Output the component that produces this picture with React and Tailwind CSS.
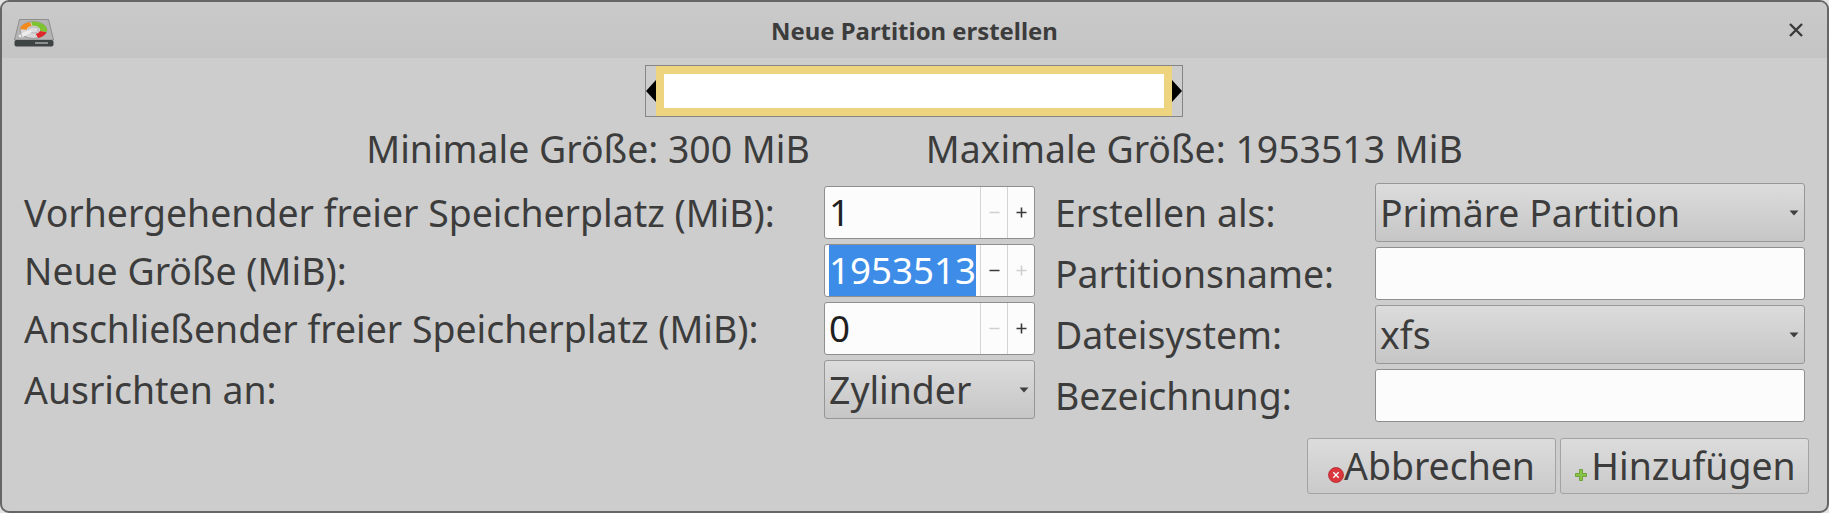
const sans = "font-['Noto_Sans','Liberation_Sans',sans-serif]";

function Caret() {
  return (
    <svg width="10" height="6" viewBox="0 0 10 6" className="shrink-0">
      <path d="M0.5 0.5H9.5L5 5.5Z" fill="#3f3f3f" />
    </svg>
  );
}

function Combo({ text, h, width, pad = "pl-[4px]" }) {
  return (
    <div className={`flex items-center justify-between ${pad} pr-[5px] ${h} ${width} rounded-[3px] border border-[#979797] bg-gradient-to-b from-[#dcdcdc] to-[#c6c6c6]`}>
      <span className="leading-none whitespace-nowrap">{text}</span>
      <Caret />
    </div>
  );
}

function Spin({ value, selected, minusOff, plusOff, h }) {
  return (
    <div className={`flex items-stretch w-[211px] ${h} rounded-[3px] border border-[#8f8f8f] bg-[#fcfcfc] overflow-hidden`}>
      <div className="flex-1 flex items-stretch pl-[4px] text-[#1f1f1f] text-[36.75px] leading-none">
        {selected ? (
          <span className="flex items-center bg-[#3d8de8] text-white w-[147px] justify-center">{value}</span>
        ) : (
          <span className="flex items-center">{value}</span>
        )}
      </div>
      <div className={`w-[27px] flex items-center justify-center border-l border-[#d3d3d3] ${minusOff ? "text-[#cfcfcf]" : "text-[#3a3a3a]"}`}>
        <svg width="11" height="11" viewBox="0 0 11 11"><path d="M0.5 5.5H10.5" stroke="currentColor" strokeWidth="1.6" /></svg>
      </div>
      <div className={`w-[27px] flex items-center justify-center border-l border-[#d3d3d3] ${plusOff ? "text-[#cfcfcf]" : "text-[#3a3a3a]"}`}>
        <svg width="11" height="11" viewBox="0 0 11 11"><path d="M0.5 5.5H10.5M5.5 0.5V10.5" stroke="currentColor" strokeWidth="1.6" /></svg>
      </div>
    </div>
  );
}

function Row({ label, children, width = "w-[800px]" }) {
  return (
    <div className="flex items-center">
      <span className={`${width} shrink-0 whitespace-nowrap leading-none`}>{label}</span>
      {children}
    </div>
  );
}

function TextBox() {
  return <div className="w-[430px] h-[53px] rounded-[3px] border border-[#8f8f8f] bg-[#fcfcfc]" />;
}

function DriveIcon() {
  return (
    <svg width="40" height="28" viewBox="0 0 40 28" className="shrink-0 mt-[6px]">
      <path d="M5.5 0.5H34.5L39.5 21H0.5Z" fill="#b4b4b4" stroke="#8e8e8e" strokeLinejoin="round" />
      <rect x="0.5" y="21" width="39" height="6.5" rx="2" fill="#3d4443" />
      <rect x="21" y="23" width="13" height="2" fill="#8b8f8e" />
      <g transform="translate(19.5 11) scale(1.6 1)">
        <circle r="8.4" fill="#d8d8d8" stroke="#6f6f6f" strokeWidth="0.4" />
        <path d="M-1.09 -6.2A6.3 6.3 0 0 1 6.09 1.63" fill="none" stroke="#7fc232" strokeWidth="4.2" />
        <path d="M-6.28 -0.55A6.3 6.3 0 0 1 -1.63 -6.09" fill="none" stroke="#f28a1e" strokeWidth="4.2" />
        <path d="M6.09 1.63A6.3 6.3 0 0 1 2.15 5.92" fill="none" stroke="#e0282c" strokeWidth="4.2" />
        <circle r="3" fill="#dcdcdc" stroke="#8d8d8d" strokeWidth="0.4" />
      </g>
      <path d="M4 16L16 10.5L18 13L7 19Z" fill="#ededed" />
      <circle cx="6" cy="17" r="2" fill="#e4e4e4" stroke="#888" strokeWidth="0.5" />
    </svg>
  );
}

function Btn({ icon, text, gap, mb, pad = "" }) {
  return (
    <div className={`w-[249px] h-[56px] flex items-center justify-center rounded-[3px] border border-[#a3a3a3] bg-gradient-to-b from-[#dcdcdc] to-[#cacaca] ${gap} ${pad}`}>
      <span className={`self-end ${mb} shrink-0 flex`}>{icon}</span>
      <span className="leading-none whitespace-nowrap">{text}</span>
    </div>
  );
}

export default function App() {
  return (
    <div className={`w-[1829px] h-[513px] bg-[#e4e4e4] ${sans}`}>
      <div className="w-full h-full flex flex-col border-2 border-[#666666] rounded-[9px] bg-[#cdcdcd] text-[37.4px] text-[#3c3c3c] overflow-hidden">
        <div className="h-[56px] shrink-0 flex items-center pl-[12px] pr-[24px] bg-gradient-to-b from-[#cacaca] to-[#c4c4c4]">
          <DriveIcon />
          <div className="flex-1 text-center text-[23.9px] font-bold text-[#3c3c3c] pr-[14px] pt-[1px]">Neue Partition erstellen</div>
          <svg width="14" height="14" viewBox="0 0 14 14">
            <path d="M1 1L13 13M13 1L1 13" stroke="#3a3a3a" strokeWidth="2.4" />
          </svg>
        </div>

        <div className="flex justify-center mt-[7px] pr-[2px]">
          <div className="w-[538px] h-[52px] flex items-center justify-between border border-[#868686]">
            <svg width="10" height="22" viewBox="0 0 10 22" className="shrink-0"><path d="M10 0V22L0 11Z" fill="#000" /></svg>
            <div className="flex-1 self-stretch border-x-[8px] border-y-[8px] border-[#eed47e] bg-white" />
            <svg width="10" height="22" viewBox="0 0 10 22" className="shrink-0"><path d="M0 0V22L10 11Z" fill="#000" /></svg>
          </div>
        </div>

        <div className="flex justify-center gap-[116px] mt-[8px] h-[48px] items-center whitespace-nowrap leading-none">
          <span>Minimale Größe: 300 MiB</span>
          <span>Maximale Größe: 1953513 MiB</span>
        </div>

        <div className="flex">
          <div className="flex flex-col gap-[5px] pl-[22px] w-[1053px] mt-[13px]">
            <Row label="Vorhergehender freier Speicherplatz (MiB):"><Spin value="1" minusOff h="h-[53px]" /></Row>
            <Row label="Neue Größe (MiB):"><Spin value="1953513" selected plusOff h="h-[53px]" /></Row>
            <Row label="Anschließender freier Speicherplatz (MiB):"><Spin value="0" minusOff h="h-[53px]" /></Row>
            <Row label="Ausrichten an:"><Combo text="Zylinder" h="h-[59px]" width="w-[211px]" /></Row>
          </div>
          <div className="flex flex-col gap-[5px] mt-[10px]">
            <Row label="Erstellen als:" width="w-[320px]"><Combo text="Primäre Partition" h="h-[59px]" width="w-[430px]" /></Row>
            <Row label="Partitionsname:" width="w-[320px]"><TextBox /></Row>
            <Row label="Dateisystem:" width="w-[320px]"><Combo text="xfs" h="h-[59px]" width="w-[430px]" /></Row>
            <Row label="Bezeichnung:" width="w-[320px]"><TextBox /></Row>
          </div>
        </div>

        <div className="flex justify-end gap-[4px] mt-[16px] pr-[18px]">
          <Btn
            gap=""
            mb="mb-[10px]"
            icon={
              <svg width="16" height="16" viewBox="0 0 16 16"><circle cx="8" cy="8" r="7.5" fill="#d9363e" stroke="#b8262c" strokeWidth="0.8" /><path d="M5.3 5.3L10.7 10.7M10.7 5.3L5.3 10.7" stroke="#fff" strokeWidth="1.4" /></svg>
            }
            text="Abbrechen"
          />
          <Btn
            gap="gap-[4px]"
            pad="pl-[2px]"
            mb="mb-[12px]"
            icon={
              <svg width="12" height="12" viewBox="0 0 12 12"><path d="M4.5 0.5H7.5V4.5H11.5V7.5H7.5V11.5H4.5V7.5H0.5V4.5H4.5Z" fill="#8bc34a" stroke="#5e9a23" strokeWidth="0.8" /></svg>
            }
            text="Hinzufügen"
          />
        </div>
      </div>
    </div>
  );
}
